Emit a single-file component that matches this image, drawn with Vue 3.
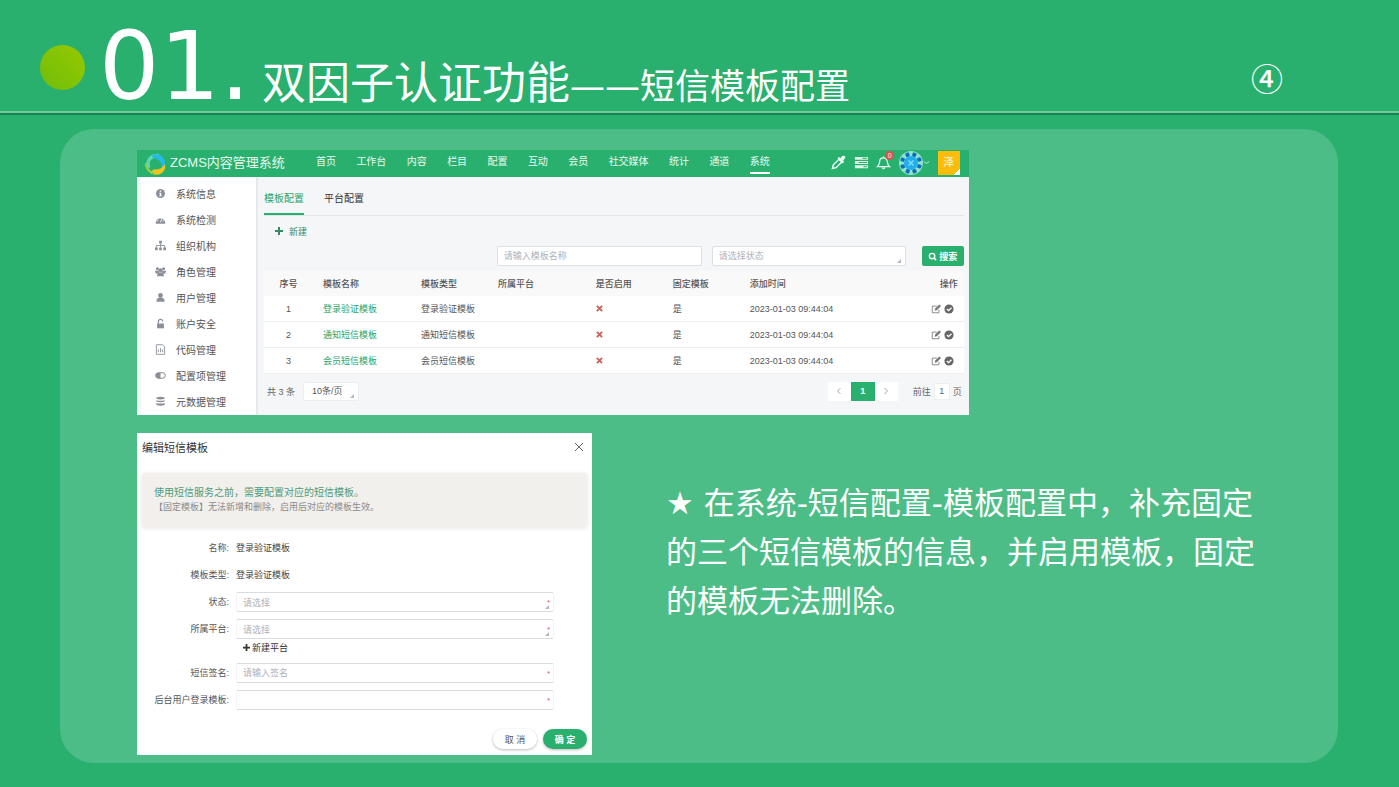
<script setup>
import { ref } from 'vue'

const nav = ['首页', '工作台', '内容', '栏目', '配置', '互动', '会员', '社交媒体', '统计', '通道', '系统']
const activeNav = ref('系统')

const menu = [
  { icon: 'info', label: '系统信息' },
  { icon: 'gauge', label: '系统检测' },
  { icon: 'tree', label: '组织机构' },
  { icon: 'group', label: '角色管理' },
  { icon: 'user', label: '用户管理' },
  { icon: 'lock', label: '账户安全' },
  { icon: 'file', label: '代码管理' },
  { icon: 'toggle', label: '配置项管理' },
  { icon: 'data', label: '元数据管理' }
]

const rows = [
  { id: 1, name: '登录验证模板', type: '登录验证模板', time: '2023-01-03 09:44:04' },
  { id: 2, name: '通知短信模板', type: '通知短信模板', time: '2023-01-03 09:44:04' },
  { id: 3, name: '会员短信模板', type: '会员短信模板', time: '2023-01-03 09:44:04' }
]
const dots = [0, 45, 90, 135, 180, 225, 270, 315]
</script>

<template>
  <div class="slide">
    <header class="title-bar">
      <span class="ball"></span>
      <h1 class="title">
        <span class="num">01.</span>
        <span class="main-title">双因子认证功能</span>
        <span class="sub-title"><span class="dash">——</span>短信模板配置</span>
      </h1>
      <span class="page-no">④</span>
    </header>

    <main class="panel">
      <section class="app">
        <div class="topbar">
          <div class="brand">
            <svg class="logo" viewBox="0 0 24 24" aria-hidden="true">
              <path d="M4 18A11 11 0 0 1 7 3Q11 0 17 1l-4 4Q4 7 7 15z" fill="#5fd6b0" />
              <path d="M9 2q10-3 14 7v6l-4 1q1-9-10-11z" fill="#25b9e8" />
              <path d="M7 22q12 5 16-5V12q-4 7-13 6z" fill="#f3c51c" />
              <path d="M1 11q-1 8 8 12l4-1Q4 19 3 12z" fill="#8bd046" />
            </svg>
            <span>ZCMS内容管理系统</span>
          </div>
          <nav class="nav">
            <a v-for="n in nav" :key="n" href="#" :class="{ active: n === activeNav }" @click.prevent="activeNav = n">{{ n }}</a>
          </nav>
          <div class="tools">
            <button type="button" aria-label="主题">
              <svg class="tool" viewBox="0 0 16 16"><path d="M1.500 14.500l1-4 6-6 3 3-6 6z" fill="none" stroke="#e7fff2" stroke-width="1.600" /><path d="M7 3l1.500-1 1.500 1.500L12 1q3-1 3.500 1.500L13 6l1 1.500L12.500 9z" fill="#e7fff2" /></svg>
            </button>
            <button type="button" aria-label="任务">
              <svg class="tool" viewBox="0 0 16 16"><path d="M1 2h14v3H1zM1 6.500h14v3H1zM1 11h14v3H1z" fill="#dff7ea" /><path d="M9 3h5v1H9zM5 7.500h9v1H5zM10 12h4v1h-4z" fill="#27b06d" /></svg>
            </button>
            <button type="button" class="bell" aria-label="消息">
              <svg class="tool" viewBox="0 0 16 16"><path d="M1.500 12.500Q4 10 4 6.500 4 3 8 3q3.500 0 4 4t2.500 5.500zM6.500 13.500q1.500 2 3 0M8 3V1.500" fill="none" stroke="#e7fff2" stroke-width="1.300" /></svg>
              <span class="badge">0</span>
            </button>
            <button type="button" class="avatar" aria-label="账户">
              <svg class="face" viewBox="0 0 24 24">
                <circle cx="12" cy="12" r="12" fill="#8fe3d2" />
                <circle cx="12" cy="12" r="7" fill="#22aeea" />
                <rect v-for="d in dots" :key="d" x="10" y="1" width="4" height="4" rx="1" fill="#116fb4" :transform="`rotate(${d + 22} 12 12)`" />
                <path d="M9.500 9.500l5 5m0-5l-5 5" stroke="#7fdcf5" stroke-width="1.500" />
              </svg>
              <svg class="caret" viewBox="0 0 8 8"><path d="M1 3l3 2 3-2" fill="none" stroke="#d8f5e5" /></svg>
            </button>
            <span class="site">泽</span>
          </div>
        </div>

        <div class="body">
          <aside class="side">
            <a v-for="m in menu" :key="m.label" href="#">
              <svg class="mi" viewBox="0 0 16 16" aria-hidden="true">
                <template v-if="m.icon === 'info'"><circle cx="8" cy="8" r="6.500" /><path d="M7 3.500h2v2H7zM6 7h3v4h1v1H6v-1h1V8H6z" fill="#fff" /></template>
                <template v-else-if="m.icon === 'gauge'"><path d="M1 14a7 8 0 1 1 14 0z" /><path d="M8 12l2-6M3 10h2M11 10h2M4 6l1 1M8 4v1" stroke="#fff" stroke-width="1.200" /></template>
                <template v-else-if="m.icon === 'tree'"><path d="M6 1h4v4H6zM0 11h4v4H0zM6 11h4v4H6zM12 11h4v4h-4z" /><path d="M8 5v6M2 11V8h12v3" fill="none" stroke="#8a8f99" stroke-width="1.300" /></template>
                <template v-else-if="m.icon === 'group'"><circle cx="3.500" cy="4" r="2.200" /><circle cx="12.500" cy="4" r="2.200" /><circle cx="8" cy="6" r="2.800" /><path d="M0 7h6l-1 4H1zM10 7h6l-1 4h-4zM3 15q0-6 5-6t5 6z" /></template>
                <template v-else-if="m.icon === 'user'"><circle cx="8" cy="5" r="3.500" /><path d="M2 14q0-6 6-6t6 6z" /></template>
                <template v-else-if="m.icon === 'lock'"><path d="M3 8h10v7H3z" /><path d="M5 8V5q0-3 3-3t3 3" fill="none" stroke="#8a8f99" stroke-width="1.800" /></template>
                <template v-else-if="m.icon === 'file'"><path d="M2 1h9l3 3v11H2zM5 8v4M8 6v6M11 8v4" fill="none" stroke="#8a8f99" stroke-width="1.300" /></template>
                <template v-else-if="m.icon === 'toggle'"><rect x="1" y="4" width="14" height="8" rx="4" fill="none" stroke="#777c85" stroke-width="1.300" /><path d="M5 4h3v8H5a4 4 0 0 1 0-8z" /></template>
                <template v-else><path d="M2 2q6-2 12 0v2q-6 2-12 0zM2 6q6 2 12 0v2q-6 2-12 0zM2 10q6 2 12 0v3q-6 2-12 0z" /></template>
              </svg>
              {{ m.label }}
            </a>
          </aside>

          <div class="content">
            <div class="tabs">
              <button type="button" class="on">模板配置</button>
              <button type="button">平台配置</button>
            </div>
            <div class="actions">
              <button type="button" class="add">
                <svg class="plus" viewBox="0 0 8 8" aria-hidden="true"><path d="M4 0v8M0 4h8" stroke="currentColor" stroke-width="2" /></svg>
                新建
              </button>
            </div>
            <form class="search" @submit.prevent>
              <input class="box name" type="text" aria-label="模板名称" placeholder="请输入模板名称" />
              <span class="pick state"><select class="box" aria-label="状态"><option>请选择状态</option></select></span>
              <button type="submit" class="go">
                <svg class="glass" viewBox="0 0 10 10" aria-hidden="true"><circle cx="4.500" cy="4.500" r="3" fill="none" stroke="#fff" stroke-width="1.500" /><path d="M6.500 6.500L9 9" stroke="#fff" stroke-width="1.700" /></svg>
                搜索
              </button>
            </form>
            <table class="grid">
              <colgroup>
                <col class="c-no" /><col class="c-wide" /><col class="c-mid" /><col class="c-wide" /><col class="c-mid" /><col class="c-mid" /><col /><col class="c-op" />
              </colgroup>
              <thead>
                <tr><th>序号</th><th>模板名称</th><th>模板类型</th><th>所属平台</th><th>是否启用</th><th>固定模板</th><th>添加时间</th><th>操作</th></tr>
              </thead>
              <tbody>
                <tr v-for="r in rows" :key="r.id">
                  <td>{{ r.id }}</td>
                  <td><a href="#">{{ r.name }}</a></td>
                  <td>{{ r.type }}</td>
                  <td></td>
                  <td><svg class="cross" viewBox="0 0 8 8" role="img" aria-label="否"><path d="M1 1l6 6M7 1L1 7" stroke="#c9655b" stroke-width="2.200" /></svg></td>
                  <td>是</td>
                  <td>{{ r.time }}</td>
                  <td>
                    <button type="button" aria-label="编辑"><svg class="op" viewBox="0 0 12 12"><path d="M9.500 7v3.500h-8v-8H7" fill="none" stroke="#777" /><path d="M4.500 8l.5-2.500L10 .5 12 2.500 7 7.500z" fill="#777" /></svg></button>
                    <button type="button" aria-label="启用"><svg class="op" viewBox="0 0 12 12"><circle cx="6" cy="6" r="5.500" fill="#666" /><path d="M3.500 6l2 2 3.500-3.500" fill="none" stroke="#fff" stroke-width="1.600" /></svg></button>
                  </td>
                </tr>
              </tbody>
            </table>
            <div class="pager">
              <span class="total">共 3 条</span>
              <span class="pick size"><select class="box" aria-label="每页条数"><option>10条/页</option></select></span>
              <div class="pages">
                <button type="button" aria-label="上一页"><svg class="arrow" viewBox="0 0 8 8"><path d="M5.500 1l-3 3 3 3" /></svg></button>
                <button type="button" class="cur">1</button>
                <button type="button" aria-label="下一页"><svg class="arrow" viewBox="0 0 8 8"><path d="M2.500 1l3 3-3 3" /></svg></button>
              </div>
              <label class="jump">前往<input type="text" value="1" />页</label>
            </div>
          </div>
        </div>
      </section>

      <div class="lower">
        <section class="dialog">
          <div class="dlg-head">
            <h2>编辑短信模板</h2>
            <button type="button" aria-label="关闭"><svg class="close" viewBox="0 0 8 8"><path d="M0 0l8 8M8 0L0 8" stroke="#666" stroke-width="1" /></svg></button>
          </div>
          <div class="tip">
            <p class="tip-main">使用短信服务之前，需要配置对应的短信模板。</p>
            <p class="tip-sub">【固定模板】无法新增和删除，启用后对应的模板生效。</p>
          </div>
          <form class="form" @submit.prevent>
            <span class="lab">名称:</span><span class="val">登录验证模板</span>
            <span class="lab">模板类型:</span><span class="val">登录验证模板</span>
            <label class="lab" for="f-state">状态:</label>
            <span class="pick req"><select id="f-state" class="box"><option>请选择</option></select></span>
            <label class="lab" for="f-plat">所属平台:</label>
            <span class="pick req"><select id="f-plat" class="box"><option>请选择</option></select></span>
            <button type="button" class="new-plat">
              <svg class="plus" viewBox="0 0 8 8" aria-hidden="true"><path d="M4 0v8M0 4h8" stroke="currentColor" stroke-width="2" /></svg>新建平台
            </button>
            <label class="lab" for="f-sign">短信签名:</label>
            <span class="req"><input id="f-sign" class="box" type="text" placeholder="请输入签名" /></span>
            <label class="lab" for="f-tpl">后台用户登录模板:</label>
            <span class="req"><input id="f-tpl" class="box" type="text" /></span>
          </form>
          <div class="dlg-foot">
            <button type="button">取 消</button>
            <button type="button" class="ok">确 定</button>
          </div>
        </section>

        <p class="note">★ 在系统-短信配置-模板配置中，补充固定的三个短信模板的信息，并启用模板，固定的模板无法删除。</p>
      </div>
    </main>
  </div>
</template>

<style>
body { background: #29b06e; }
</style>

<style scoped>
* { box-sizing: border-box; margin: 0; }
.slide {
  min-height: 100vh;
  display: flex;
  flex-direction: column;
  padding-bottom: 24px;
  background: #29b06e;
  color: #fff;
  font-family: "Liberation Sans", "Noto Sans CJK SC", sans-serif;
}
button, input, select { font: inherit; color: inherit; border: 0; padding: 0; background: none; border-radius: 0; }
button { cursor: pointer; }
a { color: inherit; text-decoration: none; }
svg { display: block; flex: none; }

.title-bar {
  display: flex;
  align-items: center;
  height: 115px;
  padding: 0 116px 0 40px;
  border-bottom: 2px solid #178350;
  box-shadow: inset 0 -2px #73c99d;
}
.ball { width: 45px; height: 45px; margin-bottom: -22px; border-radius: 50%; background: linear-gradient(45deg, #6fbe0b, #97c800); }
.title { display: flex; align-items: baseline; margin-left: 14px; font-weight: 400; white-space: nowrap; line-height: 112px; padding-top: 40px; }
.num { font-family: "DejaVu Sans", sans-serif; font-size: 95px; margin-right: 12px; }
.main-title { font-size: 44px; }
.sub-title { font-size: 35px; font-family: "Noto Sans CJK SC", sans-serif; }
.dash { font-family: "DejaVu Sans", sans-serif; }
.page-no { margin-left: auto; padding-top: 40px; font-size: 32px; line-height: 40px; font-weight: 500; font-family: "Noto Sans CJK SC", sans-serif; }

.panel { flex: 1; margin: 14px 61px 0 60px; padding: 21px 77px 8px; border-radius: 34px; background: #4dbd87; }

.app { width: 74%; background: #f5f6f8; color: #555; font-size: 9px; }
.topbar { display: flex; align-items: center; height: 27px; padding: 0 9px 0 7px; background: #29b06e; color: #e9faf1; }
.brand { display: flex; align-items: center; gap: 4px; width: 172px; height: 22px; font-size: 13px; line-height: 20px; white-space: nowrap; }
.brand span { height: 22px; }
.logo { width: 22px; height: 24px; }
.nav { flex: 1; display: flex; justify-content: space-between; font-size: 10px; white-space: nowrap; }
.nav a { height: 21px; line-height: 18px; border-bottom: 2px solid transparent; }
.nav a.active { border-color: #fff; }
.tools { display: flex; align-items: center; width: 190px; height: 25px; padding: 0 0 2px 61px; justify-content: space-between; }
.tool { width: 15px; height: 15px; }
.bell { position: relative; }
.badge { position: absolute; top: -4px; right: -3px; width: 9px; height: 9px; border-radius: 50%; background: #d9534f; font-size: 7px; line-height: 9px; text-align: center; }
.avatar { display: flex; align-items: center; }
.face { width: 24px; height: 24px; }
.caret { width: 7px; height: 7px; }
.site { width: 22px; height: 24px; line-height: 22px; text-align: center; font-size: 11px; background: linear-gradient(135deg, #fdbc08 85%, #fff 85%); }

.body { display: flex; }
.side { width: 121px; padding: 3px 0 0 14px; border-left: 4px solid #f4f5f8; border-right: 2px solid #e6e8ed; background: #fff; font-size: 10px; color: #555; }
.side a { display: flex; align-items: center; gap: 10px; height: 26px; white-space: nowrap; }
.mi { width: 11px; height: 11px; fill: #8a8f99; }
.content { flex: 1; min-width: 0; padding: 0 5px 0 6px; }
.tabs { display: flex; gap: 20px; height: 39px; border-bottom: 1px solid #e2e5e9; font-size: 10px; color: #333; }
.tabs button { height: 38px; padding-top: 5px; border-bottom: 2px solid transparent; }
.tabs .on { color: #29a468; border-color: #29b06e; }
.actions { height: 30px; padding-left: 11px; display: flex; align-items: center; }
.add { display: flex; align-items: center; gap: 6px; color: #388a61; }
.plus { width: 8px; height: 8px; }
.search { display: flex; justify-content: flex-end; height: 25px; }
.box { width: 100%; height: 20px; padding: 0 6px; border: 1px solid #dcdfe6; border-radius: 2px; background: #fff; color: #adb2bb; appearance: none; font-size: 9px; outline: none; }
.box::placeholder { color: #adb2bb; opacity: 1; }
.search .name { width: 205px; margin-right: 10px; }
.state { width: 194px; margin-right: 16px; height: 20px; }
.pick { position: relative; display: block; }
.pick::after { content: ""; position: absolute; right: 5px; bottom: 3px; border-left: 4px solid transparent; border-bottom: 4px solid #b4b7bb; }
.go { display: flex; align-items: center; justify-content: center; gap: 2px; width: 42px; height: 20px; border-radius: 2px; background: #29b06e; color: #fff; font-weight: 700; }
.glass { width: 9px; height: 9px; }

.grid { width: 100%; table-layout: fixed; border-collapse: separate; border-spacing: 0; text-align: left; background: #fff; white-space: nowrap; }
.c-no { width: 7%; }
.c-wide { width: 14%; }
.c-mid { width: 11%; }
.c-op { width: 8%; }
.grid th, .grid td { height: 26px; padding: 0 6px 0 10px; font-weight: 400; border-bottom: 1px solid #eceef0; }
.grid th { height: 25px; background: #f9f9f9; border: 0; font-weight: 500; color: #555; }
.grid th:first-child, .grid td:first-child { text-align: center; padding: 0; }
.grid th:last-child { text-align: right; }
.grid td:last-child { text-align: right; padding-right: 10px; }
.grid td a { color: #29a468; }
.grid td button { display: inline-block; vertical-align: middle; margin-left: 3px; }
.op { width: 10px; height: 10px; }
.cross { width: 7px; height: 7px; }

.pager { display: flex; align-items: center; height: 41px; padding: 0 2px 7px 3px; color: #666; }
.total { width: 36px; }
.size { width: 56px; }
.size .box { color: #555; padding-left: 8px; border-color: #eceef0; height: 19px; }
.pages { display: flex; margin-left: auto; }
.pages button { width: 23px; height: 19px; display: flex; align-items: center; justify-content: center; background: #fff; }
.pages .cur { background: #29b06e; color: #fff; font-weight: 700; width: 24px; }
.arrow { width: 8px; height: 8px; fill: none; stroke: #aaa; }
.jump { display: flex; align-items: center; gap: 3px; margin-left: 15px; }
.jump input { width: 16px; height: 17px; text-align: center; background: #fff; border: 1px solid #eceef0; }

.lower { display: grid; grid-template-columns: 455px minmax(0, 1fr); column-gap: 74px; margin-top: 18px; padding-right: 2px; }
.dialog { background: #fff; color: #555; font-size: 9px; padding: 0 5px 6px; }
.dlg-head { display: flex; align-items: center; justify-content: space-between; height: 27px; padding-right: 4px; }
.dlg-head h2 { font-size: 11px; font-weight: 400; color: #333; }
.close { width: 8px; height: 8px; }
.tip { height: 54px; margin-top: 13px; padding: 13px 12px; border-radius: 3px; background: #f1f0ed; box-shadow: 0 1px 5px #e4e2de; white-space: nowrap; }
.tip p { line-height: 14px; }
.tip-main { font-size: 10px; color: #4f9a76; }
.tip-sub { color: #8a8a8a; }
.form { display: grid; grid-template-columns: 87px 1fr; column-gap: 7px; row-gap: 7px; margin-top: 11px; padding-right: 33px; line-height: 20px; white-space: nowrap; }
.lab { text-align: right; }
.val { color: #444; }
.req { position: relative; display: block; height: 20px; }
.req::before { content: "*"; position: absolute; z-index: 1; right: 4px; top: 1px; font-size: 8px; line-height: 20px; color: #c9655b; }
.new-plat { grid-column: 2; display: flex; align-items: center; gap: 2px; height: 17px; margin: -7px 0 0 7px; color: #333; }
.new-plat .plus { width: 7px; height: 7px; }
.form .box { border-color: #d8dbe0; border-left-color: #f3f4f5; border-right-color: #f3f4f5; vertical-align: top; }
.dlg-foot { display: flex; justify-content: flex-end; gap: 6px; margin-top: 19px; }
.dlg-foot button { width: 44px; height: 20px; border-radius: 10px; background: #fff; box-shadow: 0 1px 3px #bbb; }
.dlg-foot .ok { background: #29b06e; color: #fff; font-weight: 700; }

.note { padding-top: 46px; font-family: "DejaVu Sans", "Noto Sans CJK SC", sans-serif; font-size: 31px; line-height: 49px; }
</style>
